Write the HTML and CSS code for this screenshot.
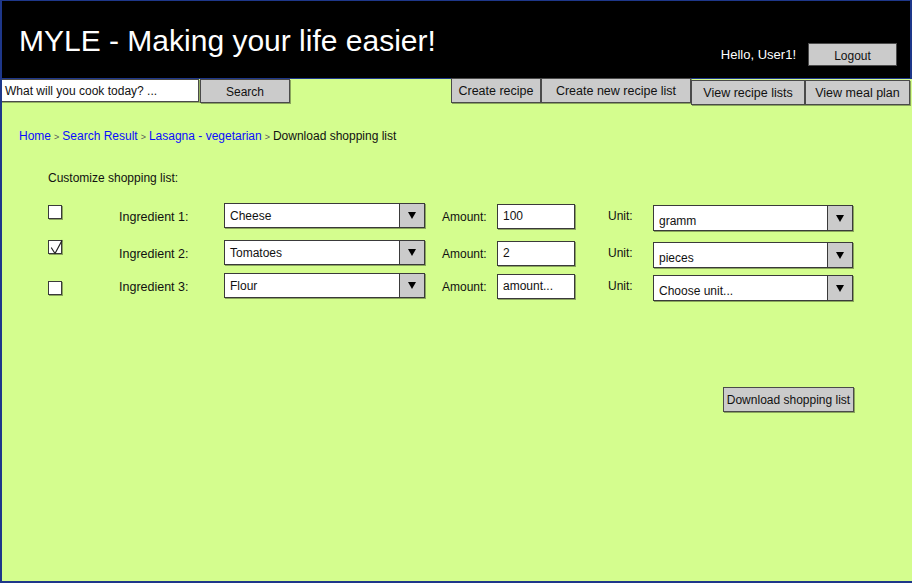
FILE: index.html
```html
<!DOCTYPE html>
<html lang="en">
<head>
<meta charset="utf-8">
<title>MYLE - Download shopping list</title>
<link rel="stylesheet" href="styles.css">
</head>
<body>
<div class="frame">
  <header class="header">
    <h1 class="title">MYLE - Making your life easier!</h1>
    <div class="user">
      <span class="hello">Hello, User1!</span>
      <div class="btn logout">Logout</div>
    </div>
  </header>

  <div class="toolbar">
    <div class="search-input">What will you cook today? ...</div>
    <div class="btn search-btn">Search</div>
    <nav class="nav">
      <div class="btn nav-btn nav-up w90">Create recipe</div>
      <div class="btn nav-btn nav-up w150">Create new recipe list</div>
      <div class="btn nav-btn nav-down w113">View recipe lists</div>
      <div class="btn nav-btn nav-down w105">View meal plan</div>
    </nav>
  </div>

  <main class="content">
    <div class="crumbs">
      <a class="crumb-link">Home</a><span class="sep">&gt;</span><a class="crumb-link">Search Result</a><span class="sep">&gt;</span><a class="crumb-link">Lasagna - vegetarian</a><span class="sep">&gt;</span><span class="crumb-current">Download shopping list</span>
    </div>

    <section class="form">
      <p class="section-title">Customize shopping list:</p>

      <div class="row row-1">
        <div class="check-cell"><div class="checkbox cb-1"></div></div>
        <div class="label ing-label">Ingredient 1:</div>
        <div class="select ing-select"><span class="select-text">Cheese</span><span class="select-arrow"><i class="tri"></i></span></div>
        <div class="label amount-label">Amount:</div>
        <div class="input amount-input">100</div>
        <div class="label unit-label">Unit:</div>
        <div class="select unit-select"><span class="select-text low">gramm</span><span class="select-arrow"><i class="tri"></i></span></div>
      </div>

      <div class="row row-2">
        <div class="check-cell"><div class="checkbox cb-2"><svg class="checkmark" width="18" height="18" viewBox="0 -4 18 18"><polyline points="3.5,4 7,9.5 14,-3.5" fill="none" stroke="#222" stroke-width="1.2" stroke-linejoin="round" stroke-linecap="round"/></svg></div></div>
        <div class="label ing-label">Ingredient 2:</div>
        <div class="select ing-select"><span class="select-text">Tomatoes</span><span class="select-arrow"><i class="tri"></i></span></div>
        <div class="label amount-label">Amount:</div>
        <div class="input amount-input">2</div>
        <div class="label unit-label">Unit:</div>
        <div class="select unit-select"><span class="select-text low">pieces</span><span class="select-arrow"><i class="tri"></i></span></div>
      </div>

      <div class="row row-3">
        <div class="check-cell"><div class="checkbox cb-3"></div></div>
        <div class="label ing-label">Ingredient 3:</div>
        <div class="select ing-select"><span class="select-text">Flour</span><span class="select-arrow"><i class="tri"></i></span></div>
        <div class="label amount-label">Amount:</div>
        <div class="input amount-input">amount...</div>
        <div class="label unit-label">Unit:</div>
        <div class="select unit-select"><span class="select-text low">Choose unit...</span><span class="select-arrow"><i class="tri"></i></span></div>
      </div>

      <div class="actions">
        <div class="btn dl-btn">Download shopping list</div>
      </div>
    </section>
  </main>
</div>
</body>
</html>
```

FILE: styles.css
```css
* { box-sizing: border-box; }

html, body {
  margin: 0;
  padding: 0;
  background: #d4fd8e;
}

body {
  font-family: "Liberation Sans", Arial, sans-serif;
  font-size: 12px;
  color: #111;
}

.frame {
  width: 912px;
  height: 583px;
  background: #d4fd8e;
  border-left: 2px solid #1e378a;
  border-top: 1px solid #1e378a;
  border-bottom: 2px solid #1e378a;
  overflow: hidden;
}

/* Header */
.header {
  height: 78px;
  background: #000;
  border-right: 2px solid #1e378a;
  border-bottom: 1px solid #1e378a;
  display: flex;
  justify-content: space-between;
  align-items: flex-start;
  padding: 0 13px 0 17px;
}

.title {
  margin: 0;
  padding-top: 24px;
  font-family: "Liberation Sans", Arial, sans-serif;
  font-weight: normal;
  font-size: 30px;
  line-height: 32px;
  color: #fff;
}

.user {
  display: flex;
  align-items: center;
  padding-top: 42px;
}

.hello {
  color: #fff;
  font-size: 13px;
  line-height: 16px;
}

/* Buttons */
.btn {
  background: #cbcbcb;
  border: 1px solid #4a4a4a;
  box-shadow: 1px 1px 0 rgba(0, 0, 0, 0.35);
  display: flex;
  align-items: center;
  justify-content: center;
  color: #111;
  font-size: 12px;
  white-space: nowrap;
}

.logout {
  width: 89px;
  height: 23px;
  margin-left: 12px;
  padding-top: 2px;
}

/* Toolbar */
.toolbar {
  height: 26px;
  margin-left: -2px;
  display: flex;
  align-items: flex-start;
}

.search-input {
  width: 199px;
  height: 23px;
  background: #fff;
  border: 1px solid #4a4a4a;
  box-shadow: 1px 1px 0 rgba(0, 0, 0, 0.3);
  padding-left: 4px;
  display: flex;
  align-items: center;
  font-size: 12px;
  white-space: nowrap;
}

.search-btn {
  width: 90px;
  height: 24px;
  margin-left: 1px;
  padding-top: 1px;
}

.nav {
  margin-left: auto;
  margin-right: 2px;
  display: flex;
  align-items: flex-start;
}

.nav-btn {
  height: 25px;
  font-size: 12.5px;
}

.nav-up { margin-top: -1px; }
.nav-down { margin-top: 1px; }

.w90 { width: 90px; }
.w150 { width: 150px; }
.w113 { width: 114px; }
.w105 { width: 105px; }

/* Content */
.content {
  padding-left: 17px;
}

.crumbs {
  margin-top: 23px;
  line-height: 16px;
  font-size: 12px;
  white-space: nowrap;
}

.crumb-link {
  color: #0b0bff;
  text-decoration: none;
}

.sep {
  color: #555;
  font-size: 9px;
  margin: 0 3px;
}

.crumb-current {
  color: #111;
}

.form {
  margin-left: 29px;
  width: 806px;
}

.section-title {
  margin: 25px 0 0 0;
  line-height: 16px;
  font-size: 12px;
}

.row {
  display: flex;
  align-items: flex-start;
  height: 28px;
}

.row-1 { margin-top: 17px; }
.row-2 { margin-top: 9px; }
.row-3 { margin-top: 5px; }

.check-cell {
  width: 71px;
  height: 25px;
}

.checkbox {
  position: relative;
  width: 14px;
  height: 14px;
  background: #fff;
  border: 1px solid #3a3a3a;
  box-shadow: 1px 1px 0 rgba(0, 0, 0, 0.35);
}

.cb-1 { margin-top: 2px; }
.cb-2 { margin-top: 0; }
.cb-3 { margin-top: 8px; }

.checkmark {
  position: absolute;
  left: -1px;
  top: -1px;
  overflow: visible;
}

.label {
  height: 25px;
  display: flex;
  align-items: center;
  padding-top: 2px;
  font-size: 12.5px;
  white-space: nowrap;
}

.ing-label { width: 105px; }

.amount-label {
  width: 55px;
  margin-left: 17px;
  font-size: 12px;
}

.unit-label {
  width: 45px;
  margin-left: 33px;
  padding-top: 0;
  font-size: 12px;
}

.select {
  display: flex;
  height: 25px;
  background: #fff;
  border: 1px solid #3a3a3a;
  box-shadow: 1px 1px 0 rgba(0, 0, 0, 0.35);
}

.ing-select { width: 201px; }

.unit-select {
  width: 200px;
  height: 26px;
  margin-top: 2px;
}

.select-text {
  flex: 1;
  display: flex;
  align-items: center;
  padding-left: 5px;
  padding-top: 1px;
  font-size: 12px;
  white-space: nowrap;
}

.select-text.low { padding-top: 5px; }

.select-arrow {
  width: 25px;
  background: #cbcbcb;
  border-left: 1px solid #3a3a3a;
  display: flex;
  align-items: center;
  justify-content: center;
}

.tri {
  display: block;
  width: 0;
  height: 0;
  border-left: 4px solid transparent;
  border-right: 4px solid transparent;
  border-top: 7px solid #000;
}

.input {
  width: 78px;
  height: 25px;
  margin-top: 1px;
  background: #fff;
  border: 1px solid #3a3a3a;
  box-shadow: 1px 1px 0 rgba(0, 0, 0, 0.35);
  padding-left: 5px;
  display: flex;
  align-items: center;
  padding-bottom: 2px;
  font-size: 12px;
}

.actions {
  display: flex;
  justify-content: flex-end;
  margin-top: 86px;
  padding-right: 0;
}

.dl-btn {
  width: 131px;
  height: 25px;
  padding-top: 1px;
}
```
